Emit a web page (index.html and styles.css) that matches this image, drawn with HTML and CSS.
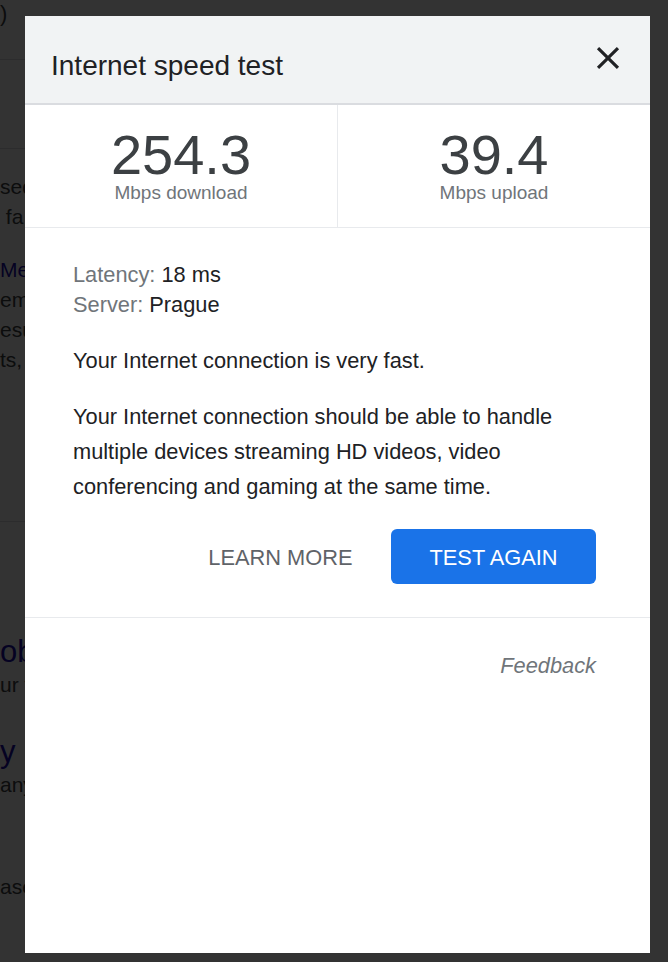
FILE: index.html
```html
<!DOCTYPE html>
<html lang="en">
<head>
<meta charset="utf-8">
<title>Internet speed test</title>
<link rel="stylesheet" href="styles.css">
</head>
<body>
<div class="page" aria-hidden="true">
  <div class="pg-head">)</div>
  <div class="pg-nav"></div>
  <div class="pg-result">
    <p class="pg-line">sed</p>
    <p class="pg-line">&nbsp;fa</p>
    <p class="pg-line pg-link pg-gap">Mea</p>
    <p class="pg-line">em</p>
    <p class="pg-line">esu</p>
    <p class="pg-line">ts,</p>
  </div>
  <div class="pg-more">
    <p class="pg-title pg-link">ob</p>
    <p class="pg-line">ur f</p>
    <p class="pg-title pg-link pg-gap2">y</p>
    <p class="pg-line">any</p>
    <p class="pg-line pg-gap3">ase</p>
  </div>
</div>
<div class="scrim"></div>

<div class="dialog" role="dialog" aria-labelledby="dlg-title">
  <header class="dlg-header">
    <h1 class="dlg-title" id="dlg-title">Internet speed test</h1>
    <button class="dlg-close" aria-label="Close">
      <svg viewBox="0 0 24 24" width="38" height="38" aria-hidden="true"><path fill="#202124" d="M19 6.41L17.59 5 12 10.59 6.41 5 5 6.41 10.59 12 5 17.59 6.41 19 12 13.41 17.59 19 19 17.59 13.41 12z"/></svg>
    </button>
  </header>

  <section class="stats">
    <div class="stat">
      <div class="stat-value">254.3</div>
      <div class="stat-label">Mbps download</div>
    </div>
    <div class="stat">
      <div class="stat-value">39.4</div>
      <div class="stat-label">Mbps upload</div>
    </div>
  </section>

  <section class="details">
    <p class="meta"><span class="meta-label">Latency:</span> 18 ms<br><span class="meta-label">Server:</span> Prague</p>
    <p class="summary">Your Internet connection is very fast.</p>
    <p class="advice">Your Internet connection should be able to handle multiple devices streaming HD videos, video conferencing and gaming at the same time.</p>
    <div class="actions">
      <button class="btn btn-text">Learn more</button>
      <button class="btn btn-primary">Test again</button>
    </div>
  </section>

  <div class="feedback-row">
    <span class="feedback">Feedback</span>
  </div>
</div>
</body>
</html>
```

FILE: styles.css
```css
html, body {
  margin: 0;
  padding: 0;
}

body {
  background: #ffffff;
  font-family: "Liberation Sans", Arial, sans-serif;
  overflow: hidden;
  height: 962px;
}

/* background page (behind the scrim); only its left edge shows */
.page {
  width: 25px;
  overflow: hidden;
  color: #3c4043;
  font-size: 21px;
  white-space: nowrap;
}

.pg-head {
  height: 60px;
  box-sizing: border-box;
  border-bottom: 1px solid #dadce0;
  font-size: 22px;
  line-height: 28px;
}

.pg-nav {
  height: 89px;
  box-sizing: border-box;
  border-bottom: 1px solid #dadce0;
}

.pg-result {
  height: 373px;
  box-sizing: border-box;
  padding-top: 23px;
  border-bottom: 1px solid #dadce0;
}

.pg-line {
  margin: 0;
  line-height: 30px;
}

.pg-link {
  color: #1a0dab;
}

.pg-gap {
  margin-top: 23px;
}

.pg-more {
  padding-top: 112px;
}

.pg-title {
  margin: 0;
  font-size: 31px;
  line-height: 36px;
}

.pg-gap2 {
  margin-top: 34px;
}

.pg-gap3 {
  margin-top: 72px;
}

.scrim {
  position: fixed;
  inset: 0;
  background: rgba(0, 0, 0, 0.8);
}

/* dialog */
.dialog {
  position: fixed;
  left: 25px;
  top: 16px;
  width: 625px;
  height: 937px;
  background: #ffffff;
  color: #202124;
  font-family: "Liberation Sans", Arial, sans-serif;
}

.dlg-header {
  height: 89px;
  box-sizing: border-box;
  background: #f1f3f4;
  border-bottom: 2px solid #dadce0;
  display: flex;
  justify-content: space-between;
  align-items: flex-start;
  padding: 0 23px 0 26px;
}

.dlg-title {
  margin: 32px 0 0;
  font-size: 28px;
  line-height: 36px;
  font-weight: 400;
  color: #202124;
}

.dlg-close {
  margin-top: 23px;
  width: 38px;
  height: 38px;
  padding: 0;
  border: 0;
  background: none;
  cursor: pointer;
}

.dlg-close svg {
  display: block;
}

.stats {
  display: grid;
  grid-template-columns: 313px 312px;
  border-bottom: 1px solid #e8eaed;
}

.stat {
  display: flex;
  flex-direction: column;
  align-items: center;
  padding: 22.5px 0 24.5px;
}

.stat:first-child {
  border-right: 1px solid #e8eaed;
}

.stat-value {
  font-size: 56px;
  line-height: 54px;
  color: #3c4043;
}

.stat-label {
  font-size: 19px;
  line-height: 21px;
  color: #70757a;
}

.details {
  padding: 32px 54px 33px 48px;
  border-bottom: 1px solid #e8eaed;
  font-size: 21.8px;
}

.meta {
  margin: 0;
  line-height: 30px;
}

.meta-label {
  color: #70757a;
}

.summary {
  margin: 23px 0 0;
  line-height: 35px;
}

.advice {
  margin: 21px 0 0;
  line-height: 35px;
}

.actions {
  display: flex;
  justify-content: flex-end;
  margin-top: 25px;
}

.btn {
  height: 55px;
  padding: 2px 38.5px 0;
  border: 0;
  border-radius: 6px;
  font-family: "Liberation Sans", Arial, sans-serif;
  font-size: 21.8px;
  text-transform: uppercase;
  cursor: pointer;
}

.btn-text {
  background: transparent;
  color: #5f6368;
}

.btn-primary {
  background: #1a73e8;
  color: #ffffff;
}

.feedback-row {
  padding: 33px 54px 0 0;
  text-align: right;
}

.feedback {
  font-size: 21.8px;
  line-height: 30px;
  font-style: italic;
  color: #70757a;
}
```
